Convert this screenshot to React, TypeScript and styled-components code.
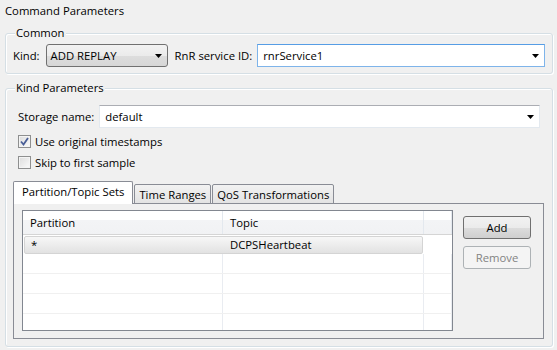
import styled, { createGlobalStyle } from 'styled-components';

const GlobalStyle = createGlobalStyle`
  body {
    margin: 0;
    background: #f0f0f0;
    font-family: 'Open Sans', 'Noto Sans', 'Liberation Sans', sans-serif;
    font-size: 11.3px;
    color: #000;
  }
`;

const Arrow = () => (
  <svg width="7" height="4" viewBox="0 0 7 4">
    <polygon points="0,0 7,0 3.5,4" fill="#000" />
  </svg>
);

const Check = () => (
  <svg width="9" height="9" viewBox="0 0 9 9">
    <path d="M1 4.5 L3.5 7.5 L8 1" fill="none" stroke="#4a5f97" strokeWidth="1.8" />
  </svg>
);

const rows = [{ partition: '*', topic: 'DCPSHeartbeat' }, null, null, null, null];

const App = () => (
  <Page>
    <GlobalStyle />
    <Title>Command Parameters</Title>
    <Group>
      <Legend>Common</Legend>
      <CommonRow>
        <Label $after={6}>Kind:</Label>
        <DropButton>
          <span>ADD REPLAY</span>
          <Arrow />
        </DropButton>
        <Label $gap={7}>RnR service ID:</Label>
        <Combo $focus>
          <span>rnrService1</span>
          <Arrow />
        </Combo>
      </CommonRow>
    </Group>
    <Group $top={14}>
      <Legend>Kind Parameters</Legend>
      <KindBody>
        <Section>
          <StorageRow>
            <Label>Storage name:</Label>
            <Combo>
              <span>default</span>
              <Arrow />
            </Combo>
          </StorageRow>
          <CheckRow>
            <Box>
              <Check />
            </Box>
            Use original timestamps
          </CheckRow>
          <CheckRow>
            <Box />
            Skip to first sample
          </CheckRow>
        </Section>
        <Tabs>
          <TabStrip>
            <Tab $active>Partition/Topic Sets</Tab>
            <Tab>Time Ranges</Tab>
            <Tab>QoS Transformations</Tab>
          </TabStrip>
          <TabPanel>
            <Table>
              <HeaderRow>
                <HeadCell>Partition</HeadCell>
                <HeadCell>Topic</HeadCell>
                <HeadCell />
              </HeaderRow>
              {rows.map((r, i) =>
                r ? (
                  <SelectedRow key={i}>
                    <Cell>{r.partition}</Cell>
                    <Cell>{r.topic}</Cell>
                  </SelectedRow>
                ) : (
                  <Row key={i}>
                    <Cell />
                    <Cell />
                    <Cell />
                  </Row>
                ),
              )}
            </Table>
            <Buttons>
              <Button>Add</Button>
              <Button disabled>Remove</Button>
            </Buttons>
          </TabPanel>
        </Tabs>
      </KindBody>
    </Group>
  </Page>
);

export default App;

const Page = styled.div`
  width: 557px;
  height: 350px;
  box-sizing: border-box;
  padding: 3px 4px 0 5px;
  overflow: hidden;
`;

const Title = styled.div`
  line-height: 16px;
`;

const Group = styled.div<{ $top?: number }>`
  position: relative;
  margin-top: ${({ $top }) => $top ?? 14}px;
  border: 1px solid #d5dfe5;
  border-radius: 3px;
  box-shadow: inset 1px 1px 0 #fff, 1px 1px 0 #fff;
`;

const Legend = styled.span`
  position: absolute;
  top: -9px;
  left: 9px;
  padding: 0 1px;
  line-height: 16px;
  background: #f0f0f0;
`;

const CommonRow = styled.div`
  display: flex;
  align-items: center;
  padding: 10px 7px 6px 7px;
`;

const Label = styled.span<{ $gap?: number; $after?: number }>`
  margin-left: ${({ $gap }) => $gap ?? 0}px;
  margin-right: ${({ $after }) => $after ?? 5}px;
  white-space: nowrap;
`;

const DropButton = styled.div`
  width: 122px;
  height: 23px;
  box-sizing: border-box;
  display: flex;
  align-items: center;
  justify-content: space-between;
  padding: 0 5px 0 4px;
  border: 1px solid #707070;
  border-radius: 3px;
  background: linear-gradient(#f2f2f2 0%, #ebebeb 50%, #dddddd 51%, #d6d6d6 100%);
`;

const Combo = styled.div<{ $focus?: boolean }>`
  flex: 1;
  height: 23px;
  box-sizing: border-box;
  display: flex;
  align-items: center;
  justify-content: space-between;
  padding: 0 5px 0 5px;
  background: #fff;
  border: 1px solid ${({ $focus }) => ($focus ? '#7eb4ea' : '#e3e9ef')};
  border-top-color: ${({ $focus }) => ($focus ? '#569de5' : '#abadb3')};
`;

const KindBody = styled.div`
  padding: 16px 8px 7px 7px;
`;

const Section = styled.div`
  padding: 0 4px 0 5px;
`;

const StorageRow = styled.div`
  display: flex;
  align-items: center;
`;

const CheckRow = styled.div`
  display: flex;
  align-items: center;
  height: 13px;
  margin-top: 7px;
  & + & {
    margin-top: 8px;
  }
`;

const Box = styled.span`
  width: 13px;
  height: 13px;
  box-sizing: border-box;
  margin-right: 4px;
  border: 1px solid #8e8f8f;
  background: linear-gradient(135deg, #dcdcdc, #fbfbfb);
  box-shadow: inset 0 0 0 1px #f4f4f4;
  display: flex;
  align-items: center;
  justify-content: center;
`;

const Tabs = styled.div`
  margin-top: 12px;
`;

const TabStrip = styled.div`
  display: flex;
  align-items: flex-end;
  height: 23px;
  position: relative;
  z-index: 1;
  margin-bottom: -1px;
`;

const Tab = styled.div<{ $active?: boolean }>`
  box-sizing: border-box;
  height: ${({ $active }) => ($active ? 23 : 20)}px;
  padding: ${({ $active }) => ($active ? '2px 8px 0 8px' : '2px 4px 0 4px')};
  line-height: 16px;
  border: 1px solid #898c95;
  border-bottom: ${({ $active }) => ($active ? 'none' : '1px solid #898c95')};
  border-radius: 2px 2px 0 0;
  background: ${({ $active }) => ($active ? '#fff' : 'linear-gradient(#f2f2f2, #e3e3e3)')};
  & + & {
    margin-left: 1px;
  }
`;

const TabPanel = styled.div`
  display: flex;
  gap: 10px;
  height: 136px;
  box-sizing: border-box;
  padding: 6px 12px 7px 8px;
  border: 1px solid #898c95;
  background: #f0f0f0;
`;

const Table = styled.div`
  width: 431px;
  box-sizing: border-box;
  border: 1px solid #828790;
  background: #fff;
  overflow: hidden;
`;

const HeaderRow = styled.div`
  display: grid;
  grid-template-columns: 200px 201px 1fr;
  height: 23px;
  background: linear-gradient(#fff 0%, #fff 40%, #f3f4f6 41%, #f1f2f4 100%);
  border-bottom: 1px solid #d5d5d5;
`;

const HeadCell = styled.div`
  padding-left: 7px;
  line-height: 23px;
  border-right: 1px solid #e3e8ee;
`;

const Row = styled.div`
  display: grid;
  grid-template-columns: 200px 201px 1fr;
  height: 19px;
  border-bottom: 1px solid #f0f0f0;
  & > * {
    border-right: 1px solid #e9ecf1;
  }
`;

const SelectedRow = styled.div`
  display: grid;
  grid-template-columns: 199px 200px;
  height: 18px;
  margin: 1px 0 0 1px;
  width: 399px;
  box-sizing: border-box;
  border: 1px solid #d4d4d4;
  border-radius: 2px;
  background: linear-gradient(#f7f7f7, #e2e2e2);
`;

const Cell = styled.div`
  padding-left: 6px;
  line-height: 16px;
`;

const Buttons = styled.div`
  display: flex;
  flex-direction: column;
  gap: 7px;
  margin-top: 6px;
`;

const Button = styled.button`
  width: 68px;
  height: 23px;
  font: inherit;
  color: ${({ disabled }) => (disabled ? '#838383' : '#000')};
  border: 1px solid ${({ disabled }) => (disabled ? '#adb2b5' : '#707070')};
  border-radius: 3px;
  background: ${({ disabled }) =>
    disabled ? '#f4f4f4' : 'linear-gradient(#f2f2f2 0%, #ebebeb 50%, #dddddd 51%, #cfcfcf 100%)'};
  padding: 0;
`;
